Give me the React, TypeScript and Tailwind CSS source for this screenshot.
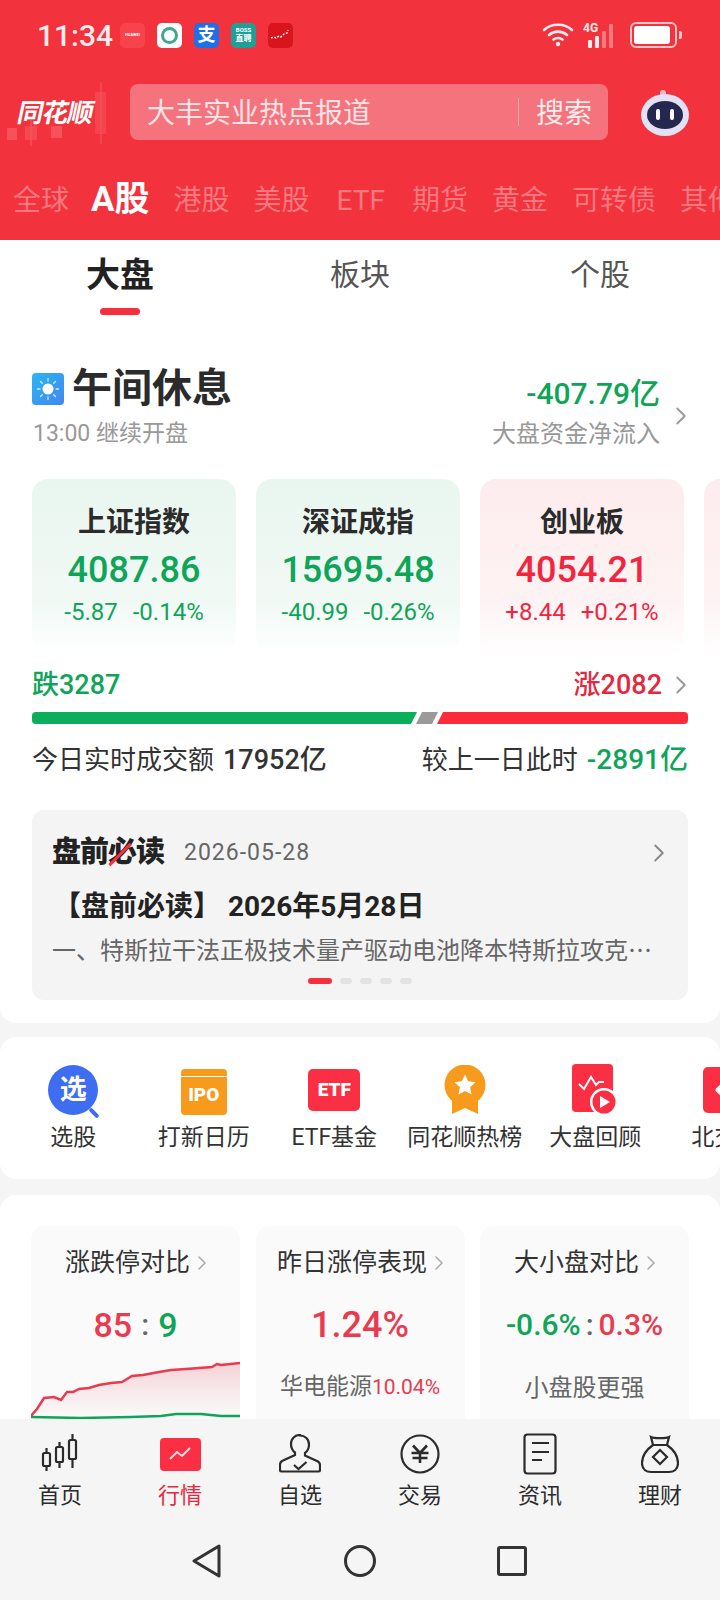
import { ChevronRight } from 'lucide-react';

const FONT = "font-['Roboto','Noto_Sans_CJK_SC',sans-serif]";

const marketTabs = [
  { label: '全球' },
  { label: 'A股', active: true },
  { label: '港股' },
  { label: '美股' },
  { label: 'ETF', wide: true },
  { label: '期货' },
  { label: '黄金' },
  { label: '可转债' },
  { label: '其他' },
];

const indexCards = [
  { name: '上证指数', value: '4087.86', change: '-5.87', percent: '-0.14%', up: false },
  { name: '深证成指', value: '15695.48', change: '-40.99', percent: '-0.26%', up: false },
  { name: '创业板', value: '4054.21', change: '+8.44', percent: '+0.21%', up: true },
];

function StatusBar() {
  return (
    <div className="flex h-[70px] items-center pl-[37px] pr-[38px]">
      <span className="w-[83px] text-[30px] font-medium text-[#fdeced]">11:34</span>
      <div className="ml-[0px] flex items-center gap-[12px]">
        <div className="flex h-[25px] w-[25px] items-center justify-center rounded-[5px] bg-[#f9434c] text-[4px] font-bold text-white">HUAWEI</div>
        <div className="flex h-[25px] w-[25px] items-center justify-center rounded-[5px] bg-white">
          <div className="h-[17px] w-[17px] rounded-full border-[3px] border-[#3fa68f]" />
        </div>
        <div className="flex h-[25px] w-[25px] items-center justify-center rounded-[5px] bg-[#1f6fe6] text-[18px] font-bold leading-none text-white">支</div>
        <div className="flex h-[25px] w-[25px] flex-col items-center justify-center rounded-[5px] bg-[#1f9f98] text-[8px] font-bold leading-[10px] text-white">
          <span className="text-[6px] leading-[8px]">BOSS</span>
          <span>直聘</span>
        </div>
        <div className="flex h-[25px] w-[25px] items-center justify-center rounded-[5px] bg-[#d9141c]">
          <svg width="22" height="12" viewBox="0 0 22 12" fill="none" stroke="#fff" strokeWidth="1.4">
            <path d="M1 9l3-1 2 1 3-2 2 1 3-3 3-1 1-3" strokeDasharray="2 1.5" />
          </svg>
        </div>
      </div>
      <div className="ml-auto flex items-center gap-[9px]">
        <svg width="32" height="26" viewBox="0 0 32 26" fill="none" stroke="#fdeced" strokeWidth="2.6" strokeLinecap="round">
          <path d="M2 8c7-7 21-7 28 0" />
          <path d="M7 13c5-4.500 13-4.500 18 0" />
          <path d="M11.500 17.500c2.500-2 6.500-2 9 0" />
          <circle cx="16" cy="22" r="2.200" fill="#fdeced" stroke="none" />
        </svg>
        <div className="relative h-[26px] w-[36px]">
          <span className="absolute left-0 top-[-3px] text-[12px] font-bold text-[#fdeced]">4G</span>
          <div className="absolute bottom-0 left-[5px] flex items-end gap-[3px]">
            <div className="h-[8px] w-[4px] rounded-[1px] bg-[#fdeced]" />
            <div className="h-[12px] w-[4px] rounded-[1px] bg-[#fdeced]" />
            <div className="h-[17px] w-[4px] rounded-[1px] bg-[#f8787f]" />
            <div className="h-[24px] w-[4px] rounded-[1px] bg-[#f8787f]" />
          </div>
        </div>
        <div className="ml-[2px] flex h-[26px] w-[47px] items-center rounded-[6px] border-2 border-[#fbc3c6] p-[2px]">
          <div className="h-full w-[36px] rounded-[3px] bg-white" />
        </div>
        <div className="ml-[-7px] h-[8px] w-[3px] rounded-r-[2px] bg-[#fbc3c6]" />
      </div>
    </div>
  );
}

function SearchRow() {
  return (
    <div className="relative mt-[7px] flex h-[70px] items-center">
      <svg className="absolute left-[6px] top-[5px]" width="105" height="66" viewBox="0 0 105 66" fill="#f5525a">
        <rect x="1" y="46" width="10" height="12" />
        <rect x="19" y="44" width="12" height="14" fillOpacity="0.7" />
        <rect x="24" y="38" width="2" height="26" fillOpacity="0.7" />
        <rect x="45" y="44" width="11" height="12" />
        <rect x="89" y="10" width="11" height="42" fillOpacity="0.6" />
        <rect x="94" y="0" width="2" height="62" fillOpacity="0.6" />
      </svg>
      <div className="relative ml-[18px] w-[80px] -skew-x-12 pt-[2px] text-[26px] font-bold tracking-[-1px] text-white">同花顺</div>
      <div className="ml-[32px] flex h-[56px] w-[478px] items-center rounded-[8px] bg-[#f5737c] pl-[17px] pr-[16px]">
        <span className="pt-[3px] text-[28px] text-[#fde3e5]">大丰实业热点报道</span>
        <div className="ml-auto h-[28px] w-px bg-[#f9a9ae]" />
        <span className="ml-[17px] pt-[3px] text-[28px] text-[#fdeced]">搜索</span>
      </div>
      <svg className="ml-[32px] mt-[2px]" width="50" height="46" viewBox="0 0 50 46">
        <circle cx="23" cy="3" r="3" fill="#f7b7c0" />
        <ellipse cx="25" cy="25" rx="24" ry="21" fill="#e3e1f5" />
        <ellipse cx="25" cy="25" rx="18" ry="14" fill="#24284f" />
        <rect x="16" y="19" width="4" height="11" rx="2" fill="#fff" />
        <rect x="30" y="19" width="4" height="11" rx="2" fill="#fff" />
      </svg>
    </div>
  );
}

function MarketTabs() {
  return (
    <div className="flex h-[93px] items-center gap-[24px] overflow-hidden pl-[13px] pt-[14px] whitespace-nowrap">
      {marketTabs.map((tab) => (
        <span
          key={tab.label}
          className={
            tab.active
              ? 'ml-[-2px] shrink-0 text-[35px] font-bold text-white'
              : tab.wide
                ? 'shrink-0 px-[3px] text-[28px] text-[#f8787f]'
                : 'shrink-0 text-[28px] text-[#f8787f]'
          }
        >
          {tab.label}
        </span>
      ))}
    </div>
  );
}

function SubTabs() {
  return (
    <div className="grid h-[78px] grid-cols-3 text-center">
      <div className="flex flex-col items-center pt-[12px]">
        <span className="text-[34px] leading-[44px] font-bold text-[#222]">大盘</span>
        <div className="mt-[11px] h-[7px] w-[40px] rounded-full bg-[#f5303c]" />
      </div>
      <div className="pt-[14px] text-[30px] leading-[40px] text-[#555]">板块</div>
      <div className="pt-[14px] text-[30px] leading-[40px] text-[#555]">个股</div>
    </div>
  );
}

function BreakStatus() {
  return (
    <div className="mt-[48px] flex h-[90px] px-[32px]">
      <div>
        <div className="flex items-center">
          <div className="flex h-[32px] w-[32px] items-center justify-center rounded-[4px] bg-gradient-to-br from-[#2bb5f5] to-[#3f87ee]">
            <svg width="24" height="24" viewBox="0 0 24 24" fill="none" stroke="#cdeefd" strokeWidth="1.300" strokeLinecap="round">
              <circle cx="12" cy="12" r="5.500" fill="#fff" stroke="none" />
              <path d="M12 1.500v2.500M12 20v2.500M1.500 12H4M20 12h2.500M4.500 4.500l1.800 1.800M17.700 17.700l1.800 1.800M4.500 19.500l1.800-1.800M17.700 6.300l1.800-1.800" />
            </svg>
          </div>
          <span className="ml-[8px] text-[40px] leading-[44px] font-bold text-[#2b2b2b]">午间休息</span>
        </div>
        <div className="mt-[7px] ml-[1px] text-[23px] leading-[32px] text-[#999]">13:00 继续开盘</div>
      </div>
      <div className="ml-auto flex items-center">
        <div className="text-right">
          <div className="text-[30px] leading-[40px] font-medium text-[#0fa558]">-407.79亿</div>
          <div className="mt-[4px] text-[24px] leading-[32px] text-[#999]">大盘资金净流入</div>
        </div>
        <ChevronRight className="mr-[-8px] ml-[6px] mt-[8px] h-[30px] w-[30px] text-[#999]" strokeWidth={1.500} />
      </div>
    </div>
  );
}

function IndexCards() {
  return (
    <div className="mt-[22px] flex gap-[20px] overflow-hidden pl-[32px]">
      {indexCards.map((card) => {
        const color = card.up ? 'text-[#f2253f]' : 'text-[#0fa558]';
        return (
          <div
            key={card.name}
            className={
              card.up
                ? 'flex h-[176px] w-[204px] shrink-0 flex-col items-center rounded-[16px] bg-gradient-to-b from-[#fdeced] via-[#fef3f4] via-70% to-white pt-[22px]'
                : 'flex h-[176px] w-[204px] shrink-0 flex-col items-center rounded-[16px] bg-gradient-to-b from-[#e9f6f0] via-[#f1f9f5] via-70% to-white pt-[22px]'
            }
          >
            <div className="text-[28px] leading-[44px] font-bold text-[#2b2b2b]">{card.name}</div>
            <div className={`text-[36px] leading-[50px] font-medium ${color}`}>{card.value}</div>
            <div className={`mt-[2px] flex gap-[15px] text-[24px] leading-[30px] ${color}`}>
              <span>{card.change}</span>
              <span>{card.percent}</span>
            </div>
          </div>
        );
      })}
      <div className="h-[176px] w-[204px] shrink-0 rounded-[16px] bg-gradient-to-b from-[#fdeced] via-[#fef3f4] via-70% to-white" />
    </div>
  );
}

function Breadth() {
  return (
    <div className="px-[32px]">
      <div className="mt-[10px] flex h-[40px] items-center text-[27px] font-medium">
        <span className="text-[#0fa558]">跌3287</span>
        <span className="ml-auto text-[#e6283f]">涨2082</span>
        <ChevronRight className="mr-[-8px] ml-[4px] h-[30px] w-[30px] text-[#999]" strokeWidth={1.500} />
      </div>
      <div className="mt-[7px] flex h-[12px] gap-[3px] overflow-hidden rounded-[4px]">
        <div className="w-[385px] bg-[#0bae5a] [clip-path:polygon(0_0,100%_0,calc(100%-6px)_100%,0_100%)]" />
        <div className="ml-[-4px] w-[22px] bg-[#9a9a9a] [clip-path:polygon(6px_0,100%_0,calc(100%-6px)_100%,0_100%)]" />
        <div className="ml-[-4px] flex-1 bg-[#fb2b39] [clip-path:polygon(6px_0,100%_0,100%_100%,0_100%)]" />
      </div>
      <div className="mt-[16px] flex h-[40px] items-center whitespace-nowrap text-[#333]">
        <span className="text-[26px]">今日实时成交额</span>
        <span className="ml-[9px] text-[27px] font-medium">17952亿</span>
        <span className="ml-auto text-[26px]">较上一日此时</span>
        <span className="ml-[9px] text-[28px] font-medium text-[#0fa558]">-2891亿</span>
      </div>
    </div>
  );
}

function MustRead() {
  return (
    <div className="mx-[32px] mt-[30px] h-[190px] rounded-[12px] bg-[#f4f4f5] px-[20px] pt-[21px]">
      <div className="flex h-[44px] items-center">
        <span className="relative text-[29px] font-black tracking-[-1px] text-[#222]">
          盘前必读
          <span className="absolute left-[53px] top-[22px] h-[3px] w-[30px] -rotate-45 bg-[#f5303c]" />
        </span>
        <span className="ml-[20px] text-[23px] tracking-[1px] text-[#666]">2026-05-28</span>
        <ChevronRight className="mr-[-6px] ml-auto h-[30px] w-[30px] text-[#888]" strokeWidth={1.500} />
      </div>
      <div className="mt-[12px] ml-[1px] flex h-[40px] items-center text-[28px] font-bold text-[#222]">
        <span className="whitespace-pre">【盘前必读】 2026年5月28日</span>
      </div>
      <div className="mt-[1px] whitespace-nowrap font-['Noto_Sans_CJK_SC',sans-serif] text-[24px] leading-[42px] text-[#666]">
        一、特斯拉干法正极技术量产驱动电池降本特斯拉攻克…
      </div>
      <div className="mt-[8px] flex justify-center gap-[8px]">
        <div className="h-[6px] w-[24px] rounded-full bg-[#f5303c]" />
        <div className="h-[6px] w-[12px] rounded-full bg-[#e2e2e2]" />
        <div className="h-[6px] w-[12px] rounded-full bg-[#e2e2e2]" />
        <div className="h-[6px] w-[12px] rounded-full bg-[#e2e2e2]" />
        <div className="h-[6px] w-[12px] rounded-full bg-[#e2e2e2]" />
      </div>
    </div>
  );
}

function QuickLink({ label, children }: { label: string; children: React.ReactNode }) {
  return (
    <div className="flex w-[130.500px] shrink-0 flex-col items-center">
      <div className="flex h-[54px] items-center justify-center">{children}</div>
      <div className="mt-[4px] text-[23px] leading-[34px] whitespace-nowrap text-[#333]">{label}</div>
    </div>
  );
}

function QuickLinks() {
  return (
    <div className="mt-[14px] flex h-[142px] items-start overflow-hidden rounded-[16px] bg-white pt-[26px] pl-[8px]">
      <QuickLink label="选股">
        <div className="relative flex h-[50px] w-[50px] items-center justify-center rounded-full bg-[#3e6df2] text-[27px] font-bold text-white">
          选
          <div className="absolute right-[-2px] bottom-[0px] h-[4px] w-[12px] rotate-45 rounded-full bg-[#3e6df2]" />
        </div>
      </QuickLink>
      <QuickLink label="打新日历">
        <div className="relative mt-[4px] flex h-[46px] w-[46px] flex-col overflow-hidden rounded-[4px] bg-[#f89a1c]">
          <div className="mt-[7px] h-px bg-white" />
          <div className="flex-1 text-center text-[19px] leading-[36px] font-black text-white">IPO</div>
        </div>
      </QuickLink>
      <QuickLink label="ETF基金">
        <div className="flex h-[42px] w-[52px] items-center justify-center rounded-[5px] bg-[#fb2f43] text-[19px] font-black text-white">ETF</div>
      </QuickLink>
      <QuickLink label="同花顺热榜">
        <svg width="42" height="50" viewBox="0 0 42 50">
          <path d="M8 30v19l13-6 13 6V30z" fill="#f89a1c" />
          <circle cx="21" cy="20" r="20.500" fill="#f89a1c" />
          <path d="M21 9.500l3.200 6.800 7.300 0.900-5.400 5 1.400 7.300-6.500-3.600-6.500 3.600 1.400-7.300-5.400-5 7.300-0.900z" fill="#fff" />
        </svg>
      </QuickLink>
      <QuickLink label="大盘回顾">
        <svg width="46" height="52" viewBox="0 0 46 52">
          <rect x="0" y="0" width="41" height="48" rx="4" fill="#fb2f43" />
          <path d="M7 20l5 5 7-12 5 8 3-3h5" fill="none" stroke="#fff" strokeWidth="2" />
          <circle cx="32" cy="38" r="14" fill="#fff" />
          <circle cx="32" cy="38" r="11.500" fill="#fb2f43" />
          <path d="M28 32l10 6-10 6z" fill="#fff" />
        </svg>
      </QuickLink>
      <QuickLink label="北交所">
        <div className="flex h-[46px] w-[46px] items-center justify-center rounded-[5px] bg-[#fb2f43]">
          <div className="h-[16px] w-[16px] rotate-45 rounded-[2px] bg-white" />
        </div>
      </QuickLink>
    </div>
  );
}

function StatCard({ title, children }: { title: string; children: React.ReactNode }) {
  return (
    <div className="relative h-[260px] w-[209px] shrink-0 overflow-hidden rounded-[14px] bg-[#fafafa] pt-[19px]">
      <div className="flex items-center justify-center text-[25px] leading-[36px] text-[#333]">
        <span className="whitespace-nowrap">{title}</span>
        <ChevronRight className="mr-[-8px] h-[24px] w-[24px] text-[#aaa]" strokeWidth={1.500} />
      </div>
      {children}
    </div>
  );
}

function LimitChart() {
  return (
    <svg className="absolute top-[134px] left-0" width="209" height="62" viewBox="0 0 209 62" fill="none">
      <defs>
        <linearGradient id="limitFill" x1="0" y1="0" x2="0" y2="1">
          <stop offset="0" stopColor="#f3c6cb" stopOpacity="0.8" />
          <stop offset="1" stopColor="#fafafa" stopOpacity="0.5" />
        </linearGradient>
      </defs>
      <path
        d="M0 56L13 38L23 37L30 40L36 32L48 29L68 25L91 22L101 16L128 12L155 9L181 7L186 4L209 3V60H0Z"
        fill="url(#limitFill)"
      />
      <path
        d="M0 56L6 49L13 38L23 37L30 40L36 32L42 32L48 29L58 28L68 25L80 23L91 22L101 16L112 15L128 12L140 10L155 9L168 8L181 7L186 4L190 5L209 3"
        stroke="#e93a4f"
        strokeWidth="2.500"
      />
      <path d="M0 57L50 58L100 57L130 56L145 54L170 54L190 56L209 56" stroke="#0fa558" strokeWidth="2.500" />
    </svg>
  );
}

function StatCards() {
  return (
    <div className="mt-[16px] rounded-t-[16px] bg-white px-[31px] pt-[31px] pb-[30px]">
      <div className="flex justify-between">
        <StatCard title="涨跌停对比">
          <div className="mt-[21px] flex items-center justify-center gap-[9px] text-[34px] leading-[46px] font-medium">
            <span className="text-[#e93a4f]">85</span>
            <span className="text-[30px] text-[#666]">:</span>
            <span className="text-[#0fa558]">9</span>
          </div>
          <LimitChart />
        </StatCard>
        <StatCard title="昨日涨停表现">
          <div className="mt-[21px] text-center text-[36px] leading-[46px] font-medium text-[#e93a4f]">1.24%</div>
          <div className="mt-[22px] flex items-baseline justify-center whitespace-nowrap">
            <span className="text-[23px] text-[#666]">华电能源</span>
            <span className="text-[21px] text-[#e93a4f]">10.04%</span>
          </div>
        </StatCard>
        <StatCard title="大小盘对比">
          <div className="mt-[21px] flex items-center justify-center gap-[5px] text-[30px] leading-[46px] font-medium">
            <span className="text-[#0fa558]">-0.6%</span>
            <span className="text-[#666]">:</span>
            <span className="text-[#e93a4f]">0.3%</span>
          </div>
          <div className="mt-[22px] text-center text-[24px] text-[#666]">小盘股更强</div>
        </StatCard>
      </div>
    </div>
  );
}

function NavIcon({ name }: { name: string }) {
  const stroke = { fill: 'none', stroke: '#2b2b2b', strokeWidth: 2.200 };
  if (name === '首页') {
    return (
      <svg width="42" height="40" viewBox="0 0 42 40" {...stroke}>
        <rect x="4" y="19" width="7" height="13" rx="1.500" />
        <path d="M7.500 14v5M7.500 32v5" />
        <rect x="17" y="13" width="7" height="15" rx="1.500" />
        <path d="M20.500 8v5M20.500 28v6" />
        <rect x="30" y="6" width="7" height="19" rx="1.500" />
        <path d="M33.500 0v6M33.500 25v9" />
      </svg>
    );
  }
  if (name === '行情') {
    return (
      <div className="flex h-[33px] w-[41px] items-center justify-center rounded-[4px] bg-[#fb2f43]">
        <svg width="24" height="14" viewBox="0 0 24 14" fill="none" stroke="#ffdfe2" strokeWidth="2">
          <path d="M2 12l7-7 5 4 8-8" />
        </svg>
      </div>
    );
  }
  if (name === '自选') {
    return (
      <svg width="42" height="40" viewBox="0 0 42 40" {...stroke}>
        <path d="M21 1c-5 0-9 3.500-9 9 0 4 2 7 4 8.500v2.500l-13 6c-1.500 1-2 2-2 3.500v5.500c0 1 .5 1.500 1.500 1.500h37c1 0 1.500-.5 1.500-1.500V31c0-1.500-.5-2.500-2-3.500l-13-6v-2.500c2-1.500 4-4.500 4-8.500 0-5.500-4-9-9-9z" />
        <path d="M15 31l4.500 4 8-7" />
      </svg>
    );
  }
  if (name === '交易') {
    return (
      <svg width="40" height="40" viewBox="0 0 40 40" {...stroke}>
        <circle cx="20" cy="20" r="18.500" />
        <path d="M13 11.500l7 7.500 7-7.500M11.500 19h17M12.500 24h15M20 19v10" strokeWidth="2.600" />
      </svg>
    );
  }
  if (name === '资讯') {
    return (
      <svg width="34" height="42" viewBox="0 0 34 42" {...stroke}>
        <rect x="1.500" y="1.500" width="31" height="39" rx="3" />
        <path d="M9 10h17M9 19h17M9 27h10" />
      </svg>
    );
  }
  return (
    <svg width="38" height="40" viewBox="0 0 38 40" {...stroke}>
      <path d="M10 3c3 1.500 15 1.500 18 0l-2 8H12z" />
      <path d="M12 11C5 16 1 23 1 29c0 7 5 9 9 9h18c4 0 9-2 9-9 0-6-4-13-11-18" />
      <path d="M19 16l7 7-7 7-7-7z" />
    </svg>
  );
}

function BottomNav() {
  const items = ['首页', '行情', '自选', '交易', '资讯', '理财'];
  return (
    <div className="relative h-[181px] shrink-0 bg-[#f5f5f5]">
      <div className="grid h-[102px] grid-cols-6 pt-[14px]">
        {items.map((item) => (
          <div key={item} className="flex flex-col items-center">
            <div className="flex h-[42px] items-center justify-center">
              <NavIcon name={item} />
            </div>
            <div className={item === '行情' ? 'mt-[4px] text-[22px] leading-[34px] text-[#e6283f]' : 'mt-[4px] text-[22px] leading-[34px] text-[#2b2b2b]'}>
              {item}
            </div>
          </div>
        ))}
      </div>
      <div className="flex h-[79px] items-center pl-[192px]">
        <svg width="30" height="34" viewBox="0 0 30 34" fill="none" stroke="#333" strokeWidth="3" strokeLinejoin="round">
          <path d="M27 2v30L2 17z" />
        </svg>
        <div className="ml-[122px] h-[32px] w-[32px] rounded-full border-[3px] border-[#333]" />
        <div className="ml-[121px] h-[30px] w-[30px] rounded-[3px] border-[3px] border-[#333]" />
      </div>
    </div>
  );
}

export default function App() {
  return (
    <div className={`flex h-[1600px] w-[720px] flex-col overflow-hidden bg-[#f5f5f5] ${FONT}`}>
      <div className="flex-1 overflow-hidden">
        <div className="h-[240px] overflow-hidden bg-[#f2323c]">
          <StatusBar />
          <SearchRow />
          <MarketTabs />
        </div>
        <div className="h-[783px] rounded-b-[16px] bg-white pt-[1px]">
          <SubTabs />
          <BreakStatus />
          <IndexCards />
          <Breadth />
          <MustRead />
        </div>
        <QuickLinks />
        <StatCards />
      </div>
      <BottomNav />
    </div>
  );
}
